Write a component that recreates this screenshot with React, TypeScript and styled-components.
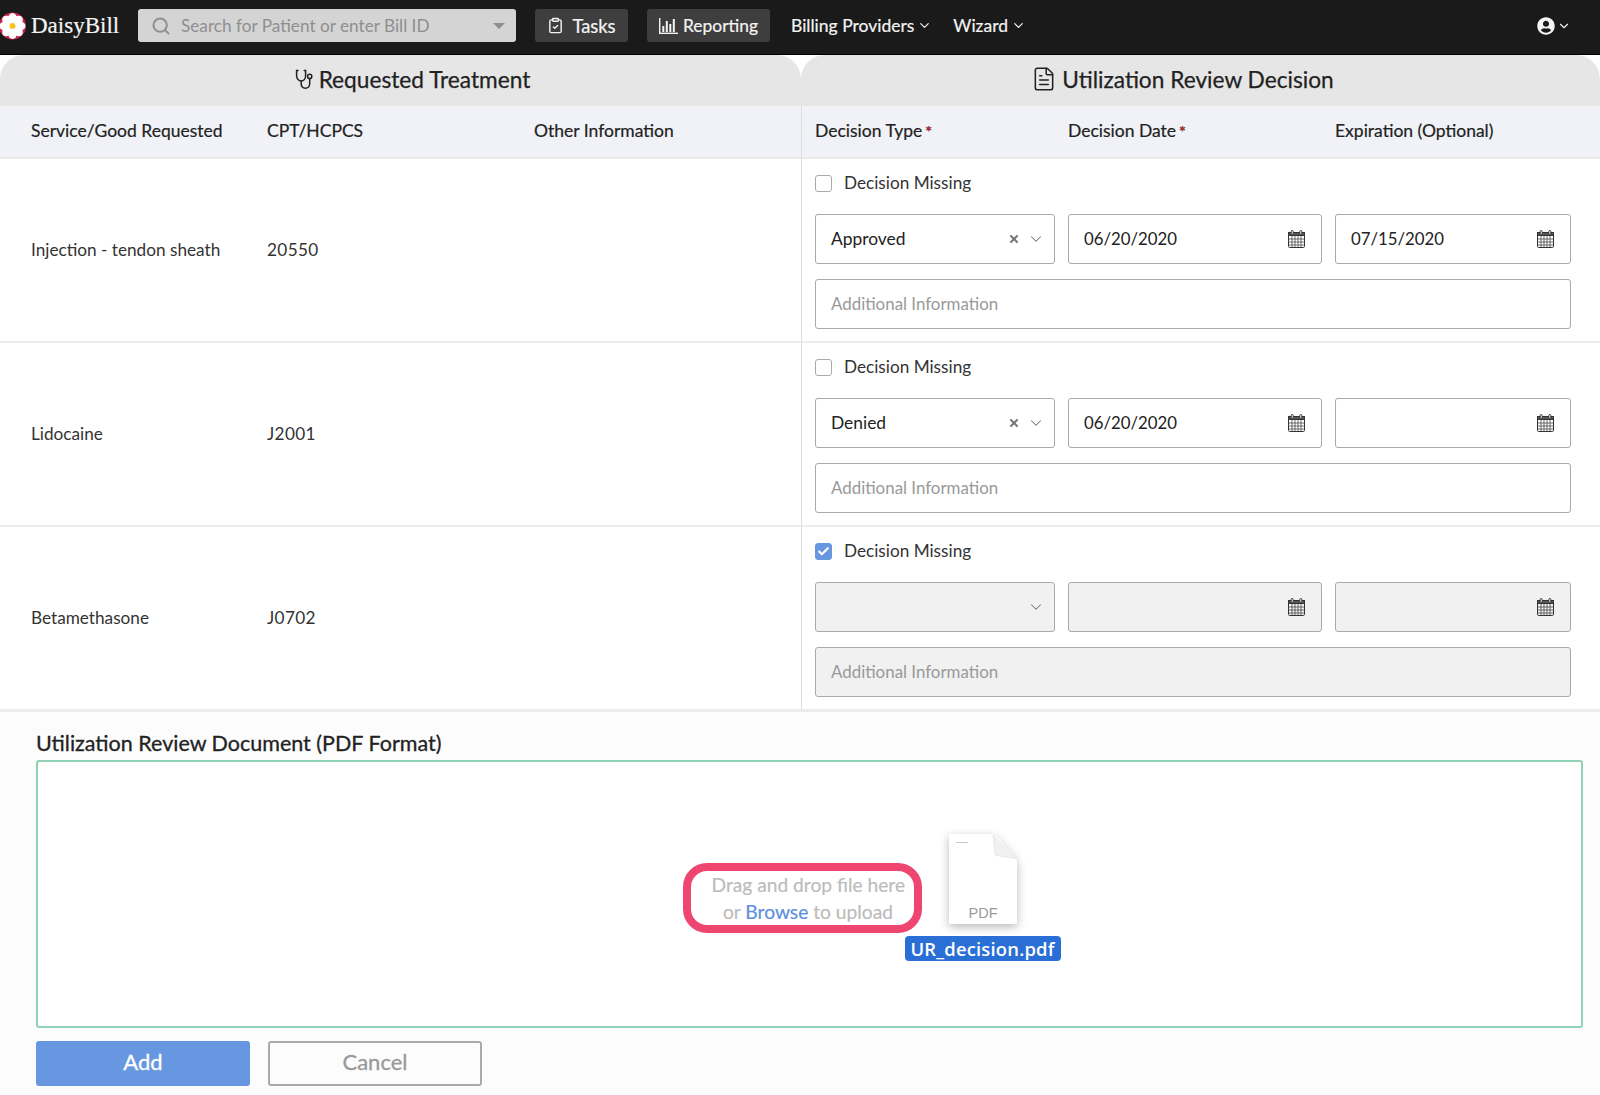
import React from "react";
import styled, { createGlobalStyle } from "styled-components";
import { Search, ClipboardCheck, ChevronDown, FileText, X, Check } from "lucide-react";
import { FaUserCircle } from "react-icons/fa";

const Global = createGlobalStyle`
  html, body { margin: 0; padding: 0; background: #fff; }
  body { font-family: Lato, "Open Sans", sans-serif; color: #222; overflow: hidden; }
  * { box-sizing: border-box; }
`;

const Page = styled.div`
  width: 1600px;
  height: 1095px;
  display: flex;
  flex-direction: column;
  overflow: hidden;
`;

const Nav = styled.header`
  height: 55px;
  flex: none;
  background: #1a1a1a;
  border-bottom: 1px solid #000;
  display: flex;
  align-items: center;
  color: #f4f4f4;
  padding-bottom: 3px;
  -webkit-text-stroke: 0.2px #f4f4f4;
`;

const Brand = styled.div`
  width: 138px;
  display: flex;
  align-items: center;
  gap: 5px;
  font-family: "Liberation Serif", serif;
  font-size: 23px;
`;

const SearchBox = styled.div`
  width: 378px;
  height: 33px;
  background: #d4d4d4;
  border-radius: 3px;
  display: flex;
  align-items: center;
  padding: 0 11px 0 13px;
  color: #8f8f8f;
  font-size: 17.2px;
  gap: 10px;
  -webkit-text-stroke: 0;
`;

const SearchText = styled.span`
  flex: 1;
`;

const Caret = styled.span`
  width: 0;
  height: 0;
  border-left: 6px solid transparent;
  border-right: 6px solid transparent;
  border-top: 6px solid #8f8f8f;
`;

const NavButton = styled.div<{ $w: number; $ml: number; $size: number; $gap: number }>`
  width: ${(p) => p.$w}px;
  margin-left: ${(p) => p.$ml}px;
  height: 33px;
  background: #3e3e3e;
  border-radius: 3px;
  display: flex;
  align-items: center;
  justify-content: center;
  gap: ${(p) => p.$gap}px;
  font-size: ${(p) => p.$size}px;
`;

const NavLink = styled.div<{ $ml: number }>`
  margin-left: ${(p) => p.$ml}px;
  display: flex;
  align-items: center;
  gap: 3px;
  font-size: 17.5px;
`;

const UserMenu = styled.div`
  margin-left: auto;
  margin-right: 29px;
  display: flex;
  align-items: center;
  gap: 2px;
`;

const Panels = styled.div`
  display: grid;
  grid-template-columns: 801px 799px;
  flex: none;
`;

const Panel = styled.section`
  display: flex;
  flex-direction: column;
`;

const PanelHeader = styled.h2<{ $shift: number }>`
  margin: 0;
  height: 51px;
  background: #e6e6e6;
  border-radius: 24px 24px 0 0;
  display: flex;
  align-items: center;
  justify-content: center;
  gap: 5px;
  font-size: 22.7px;
  font-weight: 400;
  color: #222;
  padding-bottom: 3px;
  padding-left: ${(p) => (p.$shift > 0 ? p.$shift : 0)}px;
  padding-right: ${(p) => (p.$shift < 0 ? -p.$shift : 0)}px;
  -webkit-text-stroke: 0.25px #222;
`;

const ColumnHeader = styled.div<{ $right?: boolean }>`
  height: 53px;
  background: #f0f2f7;
  border-bottom: 2px solid #e9e9e9;
  display: grid;
  align-items: center;
  grid-template-columns: ${(p) => (p.$right ? "253px 267px 1fr" : "236px 267px 1fr")};
  padding-left: ${(p) => (p.$right ? "13px" : "31px")};
  padding-bottom: 2px;
  font-size: 17.5px;
  -webkit-text-stroke: 0.2px #222;
  border-left: ${(p) => (p.$right ? "1px solid #ddd" : "none")};
`;

const Required = styled.span`
  color: #d0202a;
  font-size: 16px;
  font-weight: 700;
  margin-left: 3px;
  vertical-align: 0;
  line-height: 1;
`;

const InfoRow = styled.div`
  height: 184px;
  border-bottom: 2px solid #ececec;
  display: grid;
  align-items: center;
  grid-template-columns: 236px 267px 1fr;
  padding: 0 0 2px 31px;
  font-size: 17.2px;
  color: #333;
`;

const Code = styled.span`
  letter-spacing: 0.35px;
`;

const DecisionRow = styled.div`
  height: 184px;
  border-bottom: 2px solid #ececec;
  border-left: 1px solid #ddd;
  padding: 14px 0 0 13px;
`;

const MissingLine = styled.label`
  display: flex;
  align-items: center;
  gap: 12px;
  height: 18px;
  margin-bottom: 23px;
  font-size: 17.2px;
  color: #333;
`;

const Box = styled.span<{ $on?: boolean }>`
  width: 17px;
  height: 17px;
  border-radius: 3px;
  border: 1px solid ${(p) => (p.$on ? "#6797e0" : "#aaa")};
  background: ${(p) => (p.$on ? "#6797e0" : "#fff")};
  display: flex;
  align-items: center;
  justify-content: center;
  color: #fff;
  margin-top: 3px;
`;

const FieldGrid = styled.div`
  display: grid;
  grid-template-columns: 240px 254px 236px;
  gap: 15px 13px;
  width: 756px;
`;

const Field = styled.div<{ $off?: boolean; $wide?: boolean }>`
  height: 50px;
  border: 1px solid #aaa;
  border-radius: 3px;
  background: ${(p) => (p.$off ? "#f1f1f1" : "#fff")};
  grid-column: ${(p) => (p.$wide ? "1 / -1" : "auto")};
  display: flex;
  align-items: center;
  padding: 0 16px 1px 15px;
  font-size: 17.2px;
  color: #222;
`;

const FieldValue = styled.span<{ $date?: boolean }>`
  flex: 1;
  font-size: ${(p) => (p.$date ? "16.8px" : "17.4px")};
`;

const Placeholder = styled.span`
  color: #999;
  font-size: 16.9px;
`;

const SelectIcons = styled.span`
  display: flex;
  align-items: center;
  gap: 7px;
  margin-right: -7px;
  color: #777;
`;

const Lower = styled.section`
  flex: 1;
  background: #fcfcfc;
  border-top: 1px solid #ececec;
  padding: 18px 17px 0 36px;
`;

const LowerTitle = styled.h3`
  margin: 0;
  height: 30px;
  font-size: 21.5px;
  font-weight: 400;
  line-height: 26px;
  color: #222;
  -webkit-text-stroke: 0.3px #222;
`;

const DropZone = styled.div`
  height: 268px;
  background: #fff;
  border: 2px solid #8fd3b6;
  border-radius: 3px;
  display: flex;
  align-items: center;
  justify-content: center;
  padding: 8px 15px 0 0;
`;

const DropBox = styled.div`
  position: relative;
  width: 239px;
  height: 70px;
  border: 8px solid #ee4670;
  border-radius: 24px;
  padding: 1px 9px 0 21px;
  font-size: 19.2px;
  line-height: 26.5px;
  text-align: center;
  color: #bcbcbc;
  -webkit-text-stroke: 0.2px #bcbcbc;
  white-space: nowrap;
`;

const Browse = styled.span`
  color: #5e8fe0;
  -webkit-text-stroke: 0.2px #5e8fe0;
`;

const DragGhost = styled.div`
  position: absolute;
  left: 214px;
  top: -47px;
  width: 156px;
  display: flex;
  flex-direction: column;
  align-items: center;
`;

const GhostLabel = styled.span`
  height: 25px;
  width: 156px;
  margin-top: 4px;
  background: #2a6fd6;
  border-radius: 4px;
  color: #fff;
  font-family: "Open Sans", sans-serif;
  font-weight: 600;
  font-size: 18.4px;
  line-height: 25px;
  letter-spacing: 0.2px;
  text-align: center;
  -webkit-text-stroke: 0;
`;

const Actions = styled.div`
  display: flex;
  gap: 18px;
  margin-top: 13px;
`;

const Button = styled.button<{ $primary?: boolean }>`
  width: 214px;
  height: 45px;
  padding: 0 0 5px;
  border-radius: 3px;
  border: 2px solid ${(p) => (p.$primary ? "#6797e0" : "#aaa")};
  background: ${(p) => (p.$primary ? "#6797e0" : "#fcfcfc")};
  color: ${(p) => (p.$primary ? "#fff" : "#999")};
  font-family: Lato, sans-serif;
  font-size: 22px;
  -webkit-text-stroke: 0.3px currentColor;
`;

const Logo = () => (
  <svg width="27" height="28" viewBox="0 0 27 28" style={{ marginLeft: -1 }}>
    <circle cx="13.5" cy="14" r="13.5" fill="#c9234d" />
    {[0, 45, 90, 135, 180, 225, 270, 315].map((a) => (
      <ellipse key={a} cx="13.5" cy="6.8" rx="4.6" ry="5.8" fill="#fff" transform={`rotate(${a} 13.5 14)`} />
    ))}
    <circle cx="13.5" cy="14" r="3" fill="#f5c623" />
  </svg>
);

const BarsIcon = () => (
  <svg width="19" height="18" viewBox="0 0 19 18" fill="#f4f4f4" style={{ marginRight: -1 }}>
    <rect x="0" y="1" width="1.4" height="16" />
    <rect x="0" y="15.6" width="19" height="1.4" />
    <rect x="3.3" y="9" width="2" height="6" />
    <rect x="6.8" y="4" width="2" height="11" />
    <rect x="10.3" y="7" width="2" height="8" />
    <rect x="13.8" y="2" width="2" height="13" />
  </svg>
);

const StethoscopeIcon = () => (
  <svg width="19" height="21" viewBox="0 0 19 21" fill="none" stroke="#222" strokeWidth="1.5" strokeLinecap="round">
    <path d="M3 1.5H1.6v5.2c0 3 2.2 5.2 4.6 5.2s4.4-2.2 4.4-5.2V1.5H9.2" />
    <path d="M6.2 12v2.8c0 2.6 1.8 4.4 4.2 4.4s4.3-1.8 4.3-4.4V9.6" />
    <circle cx="14.7" cy="7.4" r="2.1" />
  </svg>
);

const CalendarIcon = () => (
  <svg width="17" height="18" viewBox="0 0 17 18" fill="none" stroke="#333" strokeWidth="1">
    <rect x="0.5" y="2.5" width="16" height="15" rx="1.2" />
    <rect x="0.5" y="2.5" width="16" height="3" fill="#555" />
    <path d="M4 5.5v11.5M7 5.5v11.5M10 5.5v11.5M13 5.5v11.5M1 9h15M1 12h15M1 15h15" strokeWidth="0.7" />
    <rect x="3.2" y="0.5" width="2" height="4" rx="1" fill="#fff" />
    <rect x="11.8" y="0.5" width="2" height="4" rx="1" fill="#fff" />
  </svg>
);

const PdfSheet = () => (
  <svg width="100" height="110" viewBox="0 0 100 110" style={{ marginBottom: -2 }}>
    <defs>
      <filter id="sheet" x="-30%" y="-30%" width="160%" height="160%">
        <feDropShadow dx="0" dy="3" stdDeviation="5" floodColor="#000" floodOpacity="0.28" />
      </filter>
    </defs>
    <path
      d="M16 12a2 2 0 0 1 2-2h37c4 0 7 1 10 4l15 17c3 3 4 6 4 10v57a2 2 0 0 1-2 2H18a2 2 0 0 1-2-2z"
      fill="#fff"
      filter="url(#sheet)"
    />
    <path d="M60 11c1 8 1 17 2 20c6 2 15 2 22 4z" fill="#f0f0f0" stroke="#e0e0e0" strokeWidth="0.6" />
    <rect x="23" y="18" width="12" height="1" fill="#c8c8c8" />
    <text x="50" y="94" textAnchor="middle" fontSize="14.5" fontFamily="Liberation Sans, sans-serif" fill="#9a9a9a">PDF</text>
  </svg>
);

type Item = {
  name: string;
  code: string;
  type?: string;
  date?: string;
  exp?: string;
  missing?: boolean;
};

const items: Item[] = [
  { name: "Injection - tendon sheath", code: "20550", type: "Approved", date: "06/20/2020", exp: "07/15/2020" },
  { name: "Lidocaine", code: "J2001", type: "Denied", date: "06/20/2020" },
  { name: "Betamethasone", code: "J0702", missing: true },
];

export default function App() {
  return (
    <Page>
      <Global />
      <Nav>
        <Brand>
          <Logo />
          DaisyBill
        </Brand>
        <SearchBox>
          <Search size={20} strokeWidth={2.4} />
          <SearchText>Search for Patient or enter Bill ID</SearchText>
          <Caret />
        </SearchBox>
        <NavButton $w={93} $ml={19} $size={18.4} $gap={8}>
          <ClipboardCheck size={17} />
          Tasks
        </NavButton>
        <NavButton $w={123} $ml={19} $size={17.4} $gap={6}>
          <BarsIcon />
          Reporting
        </NavButton>
        <NavLink $ml={21}>
          Billing Providers
          <ChevronDown size={15} strokeWidth={1.9} />
        </NavLink>
        <NavLink $ml={21}>
          Wizard
          <ChevronDown size={15} strokeWidth={1.9} />
        </NavLink>
        <UserMenu>
          <FaUserCircle size={18} />
          <ChevronDown size={14} strokeWidth={1.9} />
        </UserMenu>
      </Nav>
      <Panels>
        <Panel>
          <PanelHeader $shift={24}>
            <StethoscopeIcon />
            Requested Treatment
          </PanelHeader>
          <ColumnHeader>
            <span>Service/Good Requested</span>
            <span>CPT/HCPCS</span>
            <span>Other Information</span>
          </ColumnHeader>
          {items.map((it) => (
            <InfoRow key={it.name}>
              <span>{it.name}</span>
              <Code>{it.code}</Code>
            </InfoRow>
          ))}
        </Panel>
        <Panel>
          <PanelHeader $shift={-36}>
            <FileText size={26} strokeWidth={1.4} />
            Utilization Review Decision
          </PanelHeader>
          <ColumnHeader $right>
            <span>
              Decision Type<Required>*</Required>
            </span>
            <span>
              Decision Date<Required>*</Required>
            </span>
            <span>Expiration (Optional)</span>
          </ColumnHeader>
          {items.map((it) => (
            <DecisionRow key={it.name}>
              <MissingLine>
                <Box $on={it.missing}>{it.missing && <Check size={13} strokeWidth={4} />}</Box>
                Decision Missing
              </MissingLine>
              <FieldGrid>
                <Field $off={it.missing}>
                  <FieldValue>{it.type}</FieldValue>
                  <SelectIcons>
                    {it.type && <X size={12} strokeWidth={4} />}
                    <ChevronDown size={18} strokeWidth={1.4} />
                  </SelectIcons>
                </Field>
                <Field $off={it.missing}>
                  <FieldValue $date>{it.date}</FieldValue>
                  <CalendarIcon />
                </Field>
                <Field $off={it.missing}>
                  <FieldValue $date>{it.exp}</FieldValue>
                  <CalendarIcon />
                </Field>
                <Field $off={it.missing} $wide>
                  <Placeholder>Additional Information</Placeholder>
                </Field>
              </FieldGrid>
            </DecisionRow>
          ))}
        </Panel>
      </Panels>
      <Lower>
        <LowerTitle>Utilization Review Document (PDF Format)</LowerTitle>
        <DropZone>
          <DropBox>
            Drag and drop file here
            <br />
            or <Browse>Browse</Browse> to upload
            <DragGhost>
              <PdfSheet />
              <GhostLabel>UR_decision.pdf</GhostLabel>
            </DragGhost>
          </DropBox>
        </DropZone>
        <Actions>
          <Button $primary>Add</Button>
          <Button>Cancel</Button>
        </Actions>
      </Lower>
    </Page>
  );
}
